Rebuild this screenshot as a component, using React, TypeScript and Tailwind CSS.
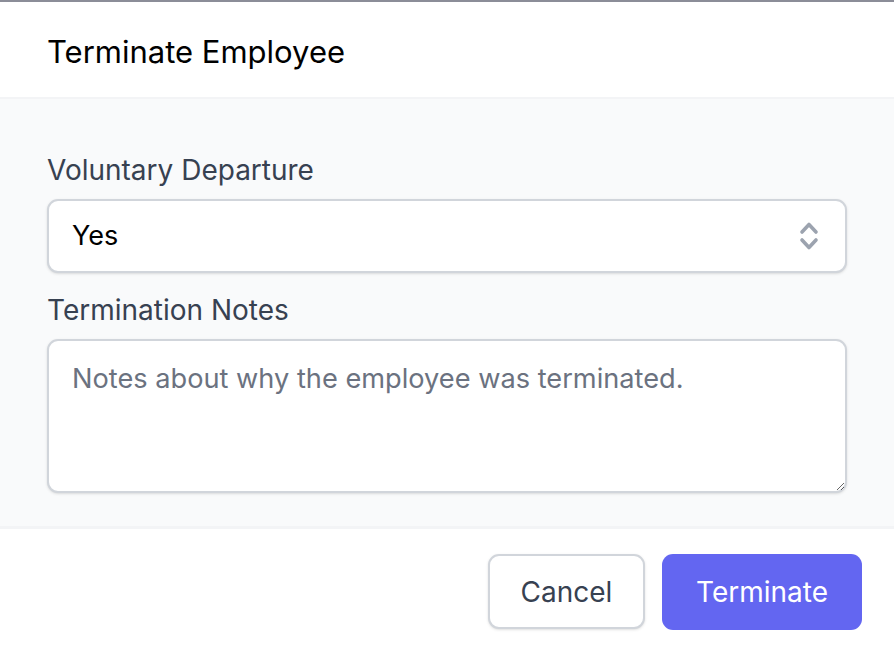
export default function App() {
  return (
    <div className="min-h-[654px] w-full bg-white flex flex-col border-t-2 border-[#8b8d98] font-['Inter',sans-serif]">
      {/* Header */}
      <div className="h-[97px] flex items-center px-[47px] border-b-2 border-[#f3f4f6]">
        <h2 className="text-[31px] leading-[36px] text-black pt-[4px]">Terminate Employee</h2>
      </div>

      {/* Body */}
      <div className="bg-[#f9fafb] px-[47px] pt-[53px] pb-[33px] flex flex-col">
        <label className="text-[28px] leading-[36px] text-[#374151] mb-[11px]">Voluntary Departure</label>
        <div className="h-[74px] rounded-[11px] border-2 border-[#d1d5db] bg-white shadow-sm flex items-center justify-between pl-[23px] pr-[26px]">
          <span className="text-[27px] text-black">Yes</span>
          <svg width="20" height="30" viewBox="0 0 20 30" fill="none" stroke="#9ca3af" strokeWidth="3.6" strokeLinecap="round" strokeLinejoin="round">
            <polyline points="3,11 10,3.5 17,11" />
            <polyline points="3,19 10,26.5 17,19" />
          </svg>
        </div>

        <label className="text-[28px] leading-[36px] text-[#374151] mt-[19px] mb-[11px]">Termination Notes</label>
        <textarea
          className="h-[154px] rounded-[11px] border-2 border-[#d1d5db] bg-white shadow-sm px-[23px] py-[20px] text-[27.2px] leading-[36px] text-black placeholder:text-[#6b7280] outline-none"
          placeholder="Notes about why the employee was terminated."
        />
      </div>

      {/* Footer */}
      <div className="border-t-[3px] border-[#f3f4f6] flex justify-end items-start gap-[17px] pr-[32px] pt-[25px] pb-[24px]">
        <button className="h-[75px] w-[157px] rounded-[11px] border-2 border-[#d1d5db] bg-white shadow-sm text-[28px] text-[#374151]">
          Cancel
        </button>
        <button className="h-[76px] w-[200px] rounded-[11px] bg-[#6366f1] text-[28px] text-white">
          Terminate
        </button>
      </div>
    </div>
  );
}
